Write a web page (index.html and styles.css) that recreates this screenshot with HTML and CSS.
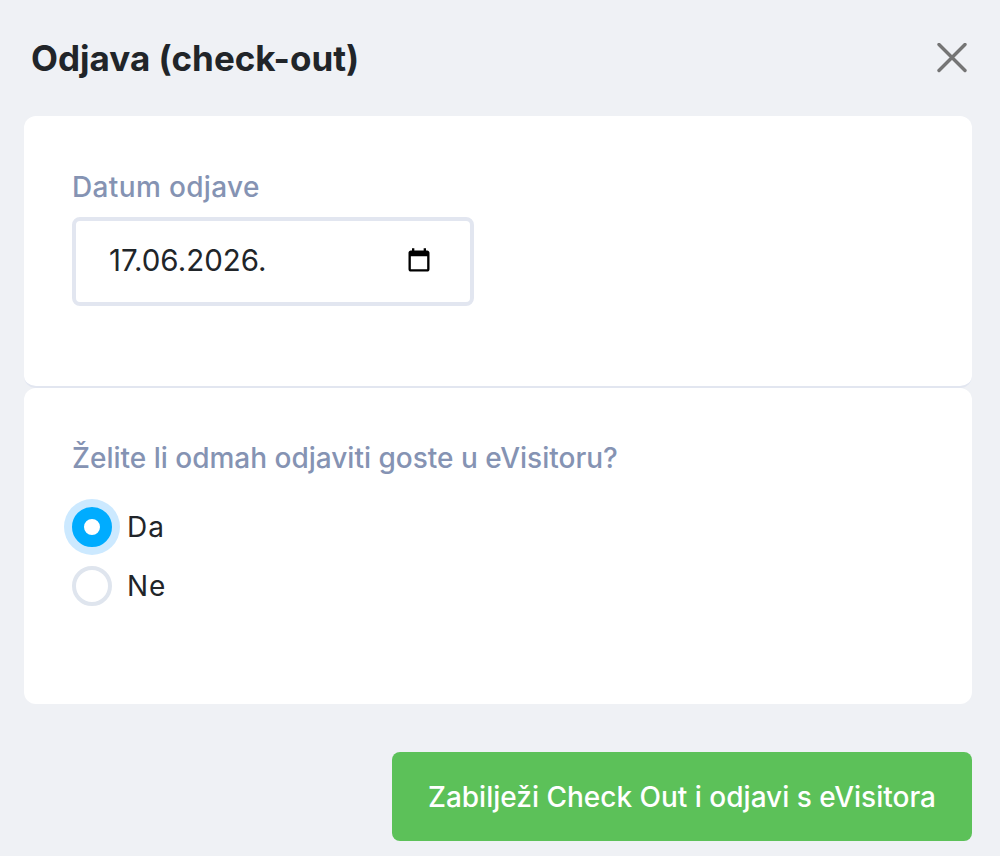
FILE: index.html
```html
<!DOCTYPE html>
<html lang="hr">
<head>
<meta charset="utf-8">
<title>Odjava (check-out)</title>
<link rel="stylesheet" href="styles.css">
</head>
<body>
<div class="modal">
  <header class="head">
    <h1 class="title">Odjava (check-out)</h1>
    <button class="close" type="button" aria-label="Zatvori">
      <svg class="close-icon" viewBox="0 0 30 30"><path d="M2 1.500 28 27.500M28 1.500 2 27.500"/></svg>
    </button>
  </header>
  <section class="card card-date">
    <div class="label label-date">Datum odjave</div>
    <div class="date-field">
      <span class="date-value">17.06.2026.</span>
      <svg class="cal-icon" viewBox="0 0 24 24"><path d="M19 3h-1V1h-2v2H8V1H6v2H5c-1.1 0-2 .9-2 2v14c0 1.1.9 2 2 2h14c1.100 0 2-.9 2-2V5c0-1.100-.9-2-2-2zm0 16H5V8h14v11z"/></svg>
    </div>
  </section>
  <section class="card card-radio">
    <div class="label label-radio">Želite li odmah odjaviti goste u eVisitoru?</div>
    <div class="radio-row">
      <span class="radio radio-on"></span><span class="radio-text">Da</span>
    </div>
    <div class="radio-row">
      <span class="radio"></span><span class="radio-text">Ne</span>
    </div>
  </section>
  <footer class="foot">
    <button class="submit" type="button">Zabilježi Check Out i odjavi s eVisitora</button>
  </footer>
</div>
</body>
</html>
```
FILE: styles.css
```css
* { box-sizing: border-box; }
html, body { margin: 0; height: 100%; }
body {
  background: #eff1f5;
  font-family: "Inter", "Noto Sans", sans-serif;
  color: #212529;
  overflow: hidden;
}
.modal { padding: 0 28px 0 24px; }
.head {
  height: 116px;
  display: flex;
  align-items: center;
  justify-content: space-between;
  padding: 0 5px 0 7px;
}
.title { margin: 0; font-size: 35px; font-weight: 700; line-height: 1; color: #212529; }
.close { border: 0; background: none; padding: 0; display: flex; }
.close-icon { width: 30px; height: 30px; fill: none; stroke: #757575; stroke-width: 3.4; stroke-linecap: round; }
.card { background: #fff; border-radius: 12px; padding: 0 48px; }
.card-date {
  height: 272px;
  padding-top: 53px;
  border-bottom: 2px solid #e2e6f0;
}
.card-radio { height: 316px; padding-top: 52px; }
.label { font-size: 28px; line-height: 36px; color: #8593b3; font-weight: 500; }
.label-date { letter-spacing: .35px; }
.label-radio { margin-bottom: 31px; }
.date-field {
  margin-top: 12px;
  width: 402px;
  height: 89px;
  border: 4px solid #e2e6f0;
  border-radius: 8px;
  display: flex;
  align-items: center;
  justify-content: space-between;
  padding: 0 37px 0 33px;
}
.date-value { font-size: 29.5px; color: #212529; line-height: 1; margin-top: -2px; }
.cal-icon { width: 28px; height: 28px; fill: #000; display: block; margin-top: -2px; }
.radio-row { display: flex; align-items: center; height: 40px; margin-bottom: 19px; }
.radio {
  width: 40px;
  height: 40px;
  border-radius: 50%;
  border: 4px solid #dfe5ee;
  background: #fff;
  margin-right: 15px;
}
.radio-on {
  border: 12px solid #00acff;
  box-shadow: 0 0 0 8px #cce9ff;
}
.radio-text { font-size: 28px; letter-spacing: 1px; color: #212529; }
.foot { display: flex; justify-content: flex-end; padding-top: 48px; }
.submit {
  width: 580px;
  height: 89px;
  border: 0;
  border-radius: 8px;
  background: #5cc159;
  color: #fff;
  font-family: inherit;
  font-size: 28px;
  font-weight: 500;
}
```
